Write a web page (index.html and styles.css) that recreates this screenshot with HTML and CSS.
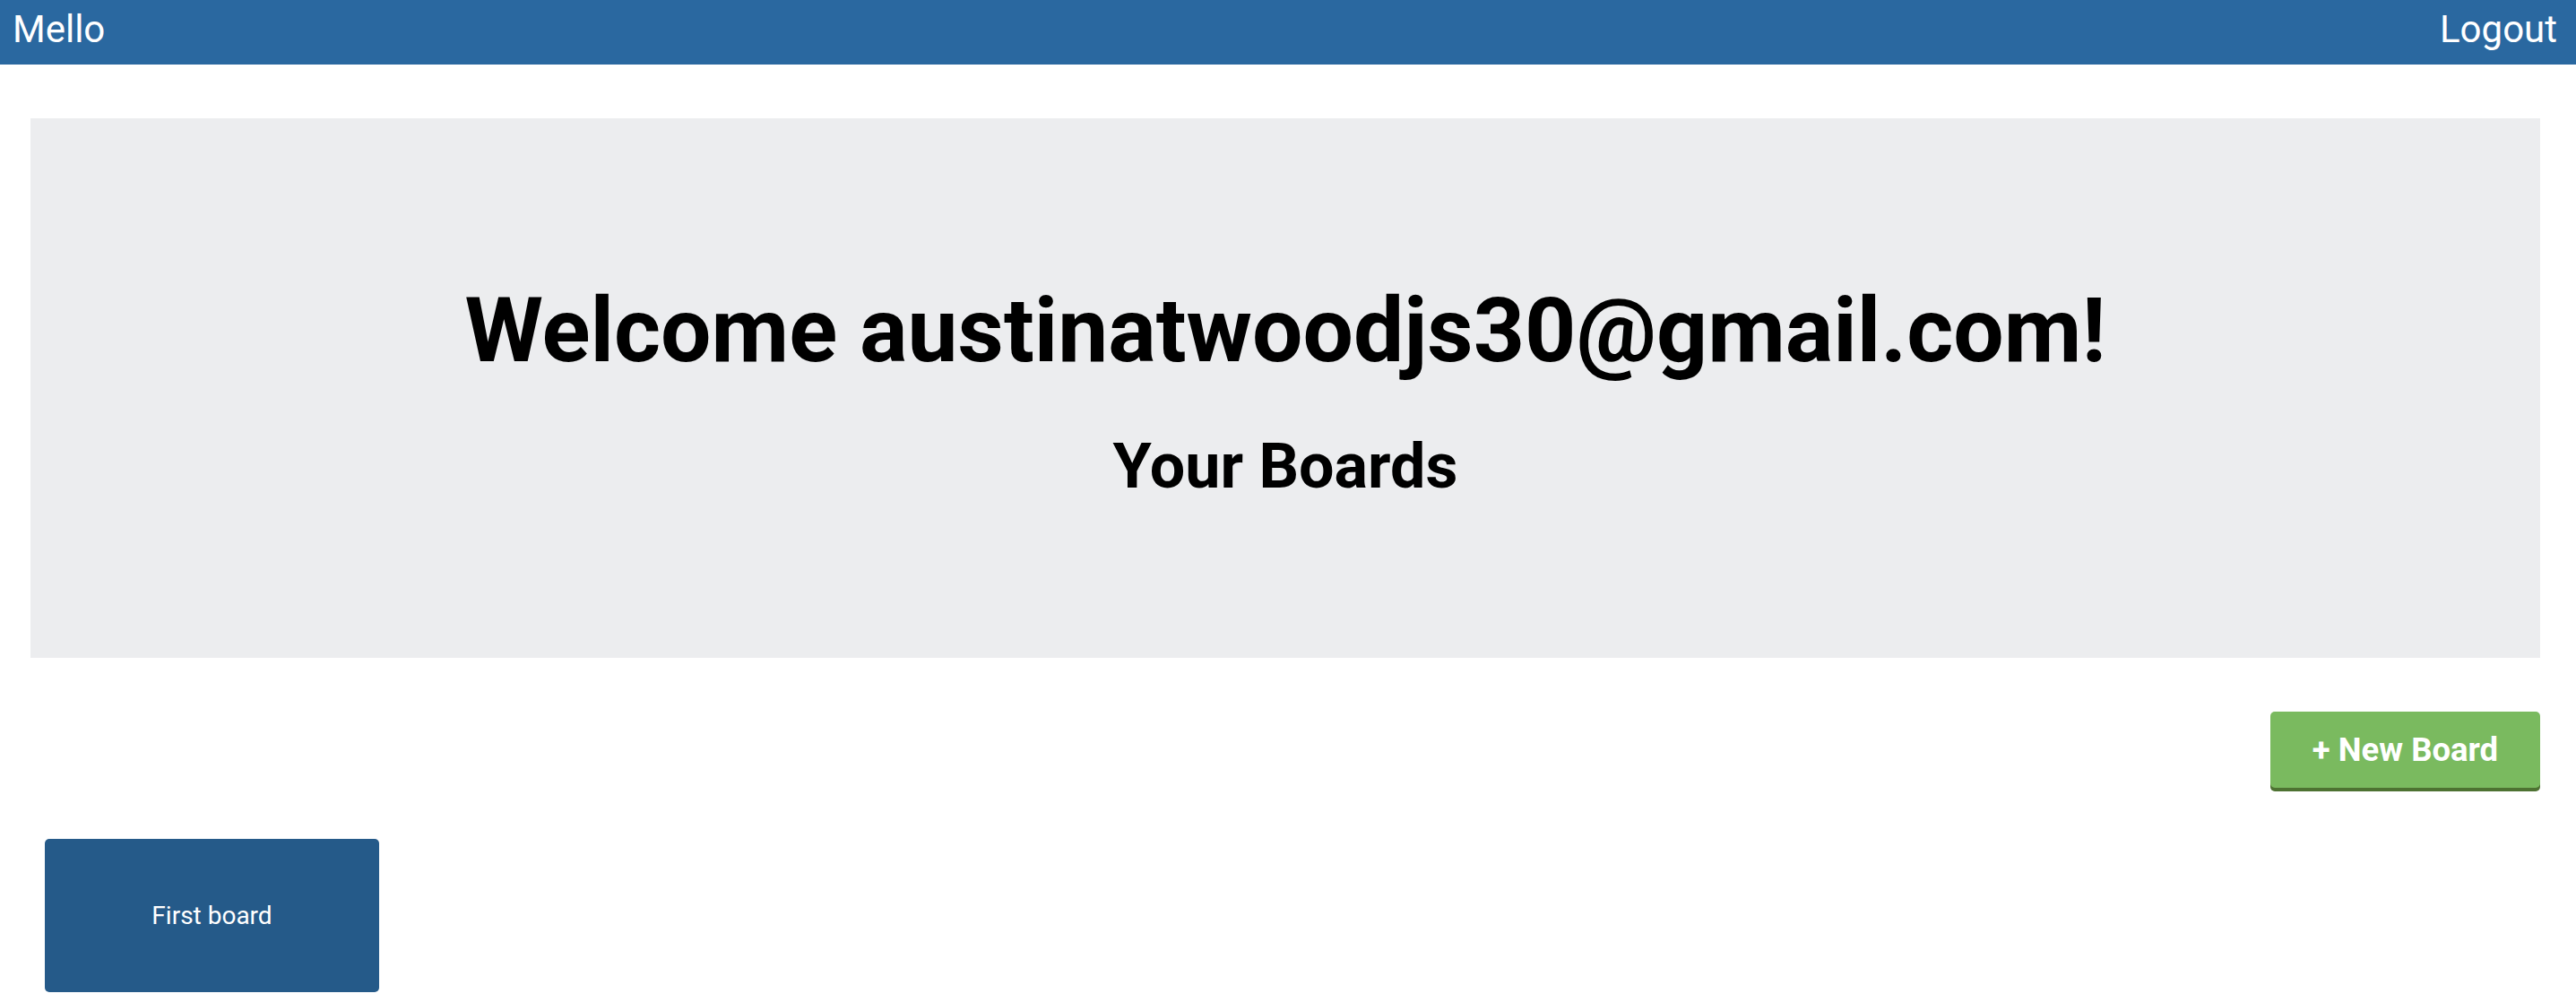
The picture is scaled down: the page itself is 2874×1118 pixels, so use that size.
FILE: index.html
```html
<!DOCTYPE html>
<html lang="en">
<head>
<meta charset="utf-8">
<title>Mello</title>
<link rel="stylesheet" href="styles.css">
</head>
<body>
<header class="topbar">
  <a class="brand">Mello</a>
  <a class="logout">Logout</a>
</header>
<main class="main">
  <section class="jumbotron">
    <h1 class="welcome">Welcome austinatwoodjs30@gmail.com!</h1>
    <h2 class="subtitle">Your Boards</h2>
  </section>
  <div class="actions">
    <button class="new-board">+ New Board</button>
  </div>
  <div class="boards">
    <div class="board-tile">First board</div>
  </div>
</main>
</body>
</html>
```
FILE: styles.css
```css
* { box-sizing: border-box; }
html, body { margin: 0; padding: 0; background: #ffffff; }
body { font-family: Roboto, "Liberation Sans", sans-serif; color: #000; }

.topbar {
  height: 72px;
  background: #2a68a0;
  display: flex;
  justify-content: space-between;
  align-items: flex-start;
  padding: 8px 21px 0 14px;
  color: #ffffff;
  font-size: 42px;
  line-height: normal;
}
.topbar a { color: #ffffff; text-decoration: none; }

.main {
  padding: 60px 40px 0 34px;
}

.jumbotron {
  background: #ecedef;
  height: 602px;
  padding-top: 177px;
  text-align: center;
}
.welcome {
  margin: 0;
  font-size: 100px;
  line-height: 1.2;
  font-weight: 700;
}
.subtitle {
  margin: 49px 0 0;
  font-size: 70px;
  line-height: 1.2;
  font-weight: 700;
}

.actions {
  display: flex;
  justify-content: flex-end;
  margin-top: 60px;
}
.new-board {
  width: 301px;
  height: 85px;
  border: none;
  border-radius: 5px;
  background: #7aba5f;
  box-shadow: 0 4px 0 #4e7232;
  color: #ffffff;
  font-family: Roboto, "Liberation Sans", sans-serif;
  font-weight: 700;
  font-size: 36.5px;
  padding: 0;
}

.boards {
  display: flex;
  margin-top: 57px;
  padding-left: 16px;
}
.board-tile {
  width: 373px;
  height: 171px;
  background: #255a89;
  border-radius: 5px;
  color: #ffffff;
  font-size: 28px;
  display: flex;
  align-items: center;
  justify-content: center;
}
```
